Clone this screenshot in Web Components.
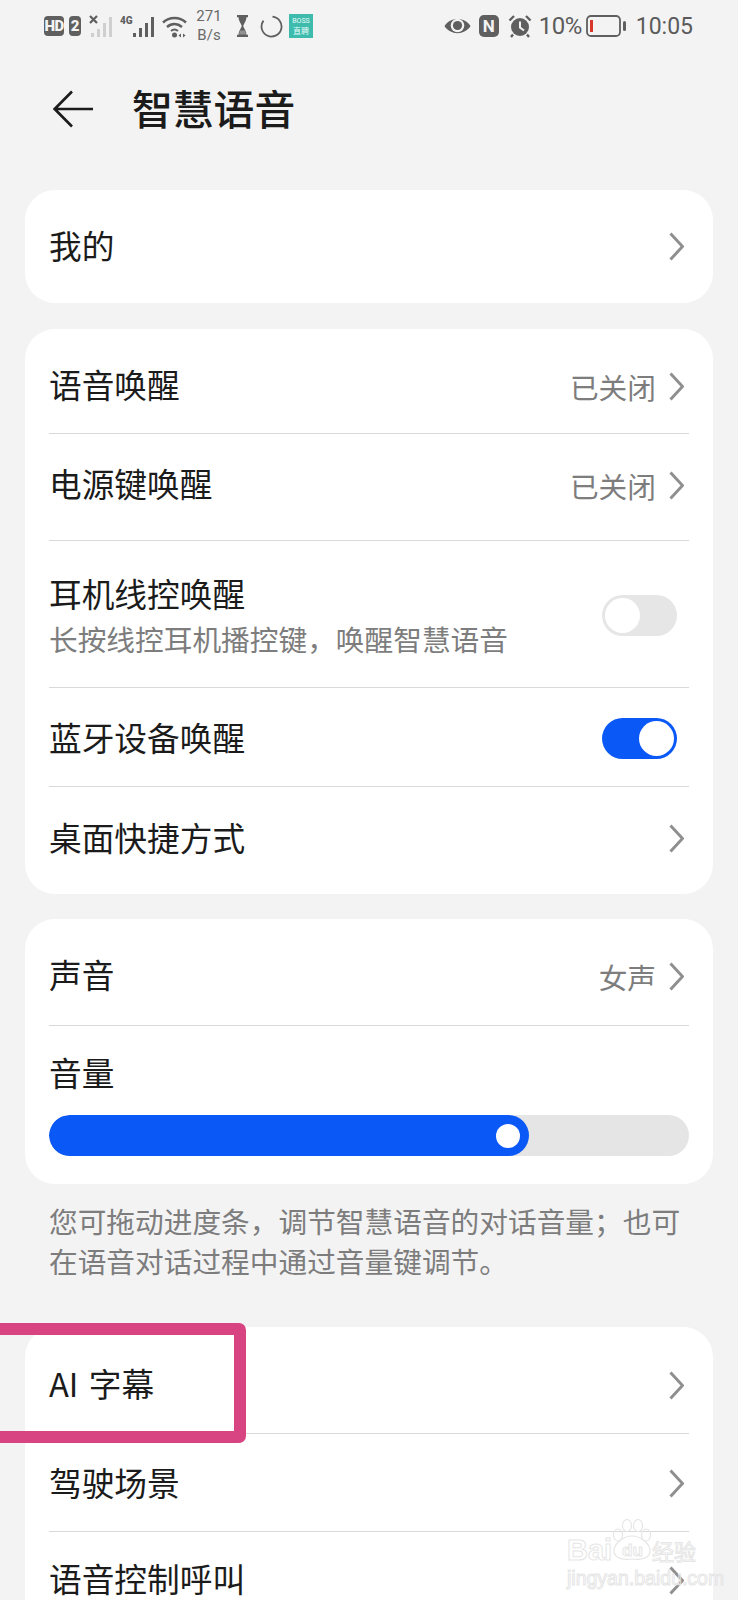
<!DOCTYPE html>
<html lang="zh-CN">
<head>
<meta charset="utf-8">
<title>智慧语音</title>
<style>
  html, body { margin: 0; background: #f3f3f4; }
  body {
    position: relative;
    width: 738px;
    height: 1600px;
    overflow: hidden;
    font-family: "Noto Sans CJK SC", "Noto Sans", sans-serif;
    color: #1b1b1b;
  }
  main { display: flex; flex-direction: column; padding: 24px 25px 0; }
</style>
</head>
<body>
<status-bar></status-bar>
<app-header>智慧语音</app-header>
<main>
  <setting-card>
    <setting-row height="113" nav plain>我的</setting-row>
  </setting-card>

  <setting-card gap="26">
    <setting-row height="105" nav value="已关闭" shift="5">语音唤醒</setting-row>
    <setting-row height="107" nav value="已关闭" shift="-2">电源键唤醒</setting-row>
    <setting-row height="147" shift="5" end-shift="1">
      耳机线控唤醒
      <span slot="sub">长按线控耳机播控键，唤醒智慧语音</span>
      <toggle-switch slot="end"></toggle-switch>
    </setting-row>
    <setting-row height="99" shift="2" end-shift="1">
      蓝牙设备唤醒
      <toggle-switch slot="end" on></toggle-switch>
    </setting-row>
    <setting-row height="107" nav plain shift="-2">桌面快捷方式</setting-row>
  </setting-card>

  <setting-card gap="25">
    <setting-row height="107" nav value="女声" shift="4">声音</setting-row>
    <volume-slider value="75">音量</volume-slider>
  </setting-card>

  <note-text>您可拖动进度条，调节智慧语音的对话音量；也可在语音对话过程中通过音量键调节。</note-text>

  <setting-card gap="0">
    <setting-row height="107" nav shift="5">AI 字幕</setting-row>
    <setting-row height="98" nav shift="1">驾驶场景</setting-row>
    <setting-row height="100" nav plain shift="-2">语音控制呼叫</setting-row>
  </setting-card>
</main>
<mark-box></mark-box>
<baidu-mark></baidu-mark>

<script>
class StatusBar extends HTMLElement {
  constructor() {
    super();
    this.attachShadow({ mode: "open" });
    this.shadowRoot.innerHTML = `
      <style>
        :host { display: flex; align-items: center; justify-content: space-between; height: 52px; padding: 0 45px 0 44px; color: #5b5b5b; font-family: Roboto, "Liberation Sans", sans-serif; }
        .group { display: flex; align-items: center; }
        svg { display: block; flex: none; }
        .badge { display: flex; align-items: center; justify-content: center; height: 20px; background: #5f5f5f; color: #f3f3f4; border-radius: 4px; font-size: 15px; font-weight: 900; }
        .hd { width: 20px; letter-spacing: -0.5px; }
        .two { width: 12px; margin-left: 5px; }
        .speed { width: 34px; margin: 0 11px 0 4px; font-size: 15px; line-height: 19px; text-align: center; color: #6a6a6a; }
        .boss { width: 24px; height: 24px; background: #3dbcae; color: #e8fbf8; font-size: 7px; line-height: 10px; text-align: center; margin-left: 6px; padding-top: 2px; box-sizing: border-box; }
        .boss span { display: block; font-family: "Noto Sans CJK SC", sans-serif; font-size: 8px; }
        .nfc { width: 20px; height: 22px; background: #5f5f5f; color: #f3f3f4; border-radius: 5px; margin: 0 9px 0 8px; font-size: 17px; font-weight: 700; line-height: 22px; text-align: center; }
        .pct { font-size: 24px; margin: 0 4px 0 7px; letter-spacing: -0.5px; }
        .time { font-size: 23px; margin-left: 9px; }
      </style>
      <div class="group">
        <div class="badge hd">HD</div>
        <div class="badge two">2</div>
        <svg width="24" height="24" viewBox="0 0 24 24" style="margin-left:8px">
          <path d="M1 2l7 7M8 2l-7 7" stroke="#5f5f5f" stroke-width="2.2"/>
          <g fill="#cfcfcf"><rect x="2" y="19" width="3" height="4"/><rect x="8" y="15" width="3" height="8"/><rect x="14" y="9" width="3" height="14"/><rect x="20" y="3" width="3" height="20"/></g>
        </svg>
        <svg width="35" height="24" viewBox="0 0 35 24" style="margin-left:7px">
          <text x="0" y="10" font-size="10" font-weight="900" fill="#5f5f5f" font-family="Roboto, sans-serif">4G</text>
          <g fill="#5f5f5f"><rect x="13" y="19" width="3" height="4"/><rect x="19" y="14" width="3" height="9"/><rect x="25" y="9" width="3" height="14"/><rect x="31" y="3" width="3" height="20"/></g>
        </svg>
        <svg width="26" height="24" viewBox="0 0 26 24" style="margin-left:7px">
          <g fill="none" stroke="#5f5f5f" stroke-width="2.4"><path d="M1 8.500C7.500 2.500 17.500 2.500 24 8.500"/><path d="M5 13C9.500 9 15.500 9 20 13"/></g>
          <path d="M9 17C11 15.300 14 15.300 16 17" fill="none" stroke="#5f5f5f" stroke-width="2"/>
          <circle cx="12.500" cy="21" r="2.500" fill="#5f5f5f"/>
          <path d="M19 19.500l-2.500 2 2.500 2zM21 19.500l2.500 2-2.500 2z" fill="#5f5f5f"/>
        </svg>
        <div class="speed">271<br>B/s</div>
        <svg width="11" height="22" viewBox="0 0 11 22">
          <path d="M0 1h11M0 21h11" stroke="#5f5f5f" stroke-width="2.400"/>
          <path d="M1.500 2h8c0 4-2.500 6.500-3.300 9 .8 2.500 3.300 5 3.300 9h-8c0-4 2.500-6.500 3.300-9C4 8.500 1.500 6 1.500 2z" fill="#5f5f5f"/>
          <path d="M3 15.500h5l1 4H2z" fill="#f3f3f4" opacity=".35"/>
        </svg>
        <svg width="23" height="23" viewBox="0 0 23 23" style="margin-left:12px">
          <path d="M12.500 1.600A10 10 0 1 1 3.500 5.600" fill="none" stroke="#5f5f5f" stroke-width="1.800"/>
        </svg>
        <div class="boss">BOSS<span>直聘</span></div>
      </div>
      <div class="group">
        <svg width="27" height="20" viewBox="0 0 27 20">
          <path d="M.5 10C6 .5 21 .5 26.500 10 21 19.500 6 19.500 .5 10z" fill="#5f5f5f"/>
          <circle cx="13.500" cy="9.500" r="6.800" fill="#f3f3f4"/>
          <circle cx="13.500" cy="9.500" r="4.600" fill="#5f5f5f"/>
        </svg>
        <div class="nfc">N</div>
        <svg width="24" height="24" viewBox="0 0 24 24">
          <circle cx="12" cy="13" r="9" fill="#5f5f5f"/>
          <path d="M12 7.500V13.500l4 3" fill="none" stroke="#f3f3f4" stroke-width="2"/>
          <path d="M1.500 6.500L6 2M22.500 6.500L18 2M5 20.500l-2 2.500M19 20.500l2 2.500" stroke="#5f5f5f" stroke-width="2.400"/>
        </svg>
        <div class="pct">10%</div>
        <svg width="41" height="22" viewBox="0 0 41 22">
          <rect x="1" y="1" width="33" height="20" rx="4" fill="none" stroke="#5f5f5f" stroke-width="1.800"/>
          <rect x="4" y="5" width="3" height="12" fill="#d8382c"/>
          <rect x="37" y="6" width="3" height="10" rx="1.500" fill="#5f5f5f"/>
        </svg>
        <div class="time">10:05</div>
      </div>`;
  }
}

class AppHeader extends HTMLElement {
  constructor() {
    super();
    this.attachShadow({ mode: "open" });
    this.shadowRoot.innerHTML = `
      <style>
        :host { display: flex; align-items: center; height: 114px; padding-left: 53px; box-sizing: border-box; }
        svg { display: block; margin-right: 38px; }
        .title { font-size: 40.8px; font-weight: 500; line-height: 56px; margin-bottom: 2px; color: #1b1b1b; }
      </style>
      <svg width="41" height="38" viewBox="0 0 41 38">
        <path d="M40 19H2M19 1.500L1.700 19 19 36.500" fill="none" stroke="#1b1b1b" stroke-width="2.600"/>
      </svg>
      <div class="title"><slot></slot></div>`;
  }
}

class SettingCard extends HTMLElement {
  constructor() {
    super();
    this.attachShadow({ mode: "open" });
    this.shadowRoot.innerHTML = `
      <style>
        :host { display: block; background: #fff; border-radius: 30px; padding: 0 24px; }
      </style>
      <slot></slot>`;
  }
  connectedCallback() {
    if (this.hasAttribute("gap")) this.style.marginTop = this.getAttribute("gap") + "px";
  }
}

// nudges a centred flex child up or down by d px, using margins
function nudge(el, d) {
  el.style.marginTop = d > 0 ? 2 * d + "px" : "0";
  el.style.marginBottom = d < 0 ? -2 * d + "px" : "0";
}

class SettingRow extends HTMLElement {
  constructor() {
    super();
    this.attachShadow({ mode: "open" });
    this.shadowRoot.innerHTML = `
      <style>
        :host { display: flex; align-items: center; justify-content: space-between; box-sizing: border-box; border-bottom: 1px solid #d9d9d9; }
        :host([plain]) { border-bottom: none; }
        .text { display: flex; flex-direction: column; font-size: 32.7px; line-height: 44px; color: #1b1b1b; word-spacing: 3px; }
        ::slotted([slot="sub"]) { font-size: 28.7px; line-height: 48px; color: #7d7d7d; }
        .end { display: flex; align-items: center; }
        .value { font-size: 28.7px; color: #7d7d7d; margin-right: 13px; }
        svg { display: block; margin-right: 5px; }
      </style>
      <div class="text"><slot></slot><slot name="sub"></slot></div>
      <div class="end"><slot name="end"></slot></div>`;
  }
  connectedCallback() {
    this.style.height = this.getAttribute("height") + "px";
    const end = this.shadowRoot.querySelector(".end");
    const shift = Number(this.getAttribute("shift") || 0);
    const endShift = this.hasAttribute("end-shift") ? Number(this.getAttribute("end-shift")) : shift;
    nudge(this.shadowRoot.querySelector(".text"), shift - 2);
    nudge(end, endShift);
    if (this.hasAttribute("value")) {
      const value = document.createElement("span");
      value.className = "value";
      value.textContent = this.getAttribute("value");
      end.appendChild(value);
    }
    if (this.hasAttribute("nav")) {
      end.insertAdjacentHTML("beforeend", `
        <svg width="15" height="29" viewBox="0 0 15 29">
          <path d="M1.500 1.500L13.500 14.500 1.500 27.500" fill="none" stroke="#8f8f8f" stroke-width="3"/>
        </svg>`);
    }
  }
}

class ToggleSwitch extends HTMLElement {
  constructor() {
    super();
    this.attachShadow({ mode: "open" });
    this.shadowRoot.innerHTML = `
      <style>
        :host { display: block; width: 75px; height: 41px; margin-right: 12px; box-sizing: border-box; padding: 3px; border-radius: 21px; background: #e6e6e6; }
        :host([on]) { background: #0a59f7; }
        .thumb { width: 35px; height: 35px; border-radius: 50%; background: #fff; }
        :host([on]) .thumb { margin-left: 34px; }
      </style>
      <div class="thumb"></div>`;
  }
}

class VolumeSlider extends HTMLElement {
  constructor() {
    super();
    this.attachShadow({ mode: "open" });
    this.shadowRoot.innerHTML = `
      <style>
        :host { display: block; height: 158px; padding-top: 24px; box-sizing: border-box; }
        .label { font-size: 32.7px; line-height: 44px; color: #1b1b1b; }
        .track { height: 41px; margin-top: 21px; border-radius: 21px; background: #e5e5e5; overflow: hidden; }
        .fill { display: flex; align-items: center; justify-content: flex-end; height: 100%; border-radius: 21px; background: #0a59f7; box-sizing: border-box; padding-right: 9px; }
        .thumb { width: 24px; height: 24px; border-radius: 50%; background: #fff; }
      </style>
      <div class="label"><slot></slot></div>
      <div class="track"><div class="fill"><div class="thumb"></div></div></div>`;
  }
  connectedCallback() {
    this.shadowRoot.querySelector(".fill").style.width = this.getAttribute("value") + "%";
  }
}

class NoteText extends HTMLElement {
  constructor() {
    super();
    this.attachShadow({ mode: "open" });
    this.shadowRoot.innerHTML = `
      <style>
        :host { display: block; padding: 17px 24px 0; height: 143px; box-sizing: border-box; font-size: 28.7px; line-height: 39.500px; color: #7d7d7d; }
      </style>
      <slot></slot>`;
  }
}

class MarkBox extends HTMLElement {
  constructor() {
    super();
    this.attachShadow({ mode: "open" });
    this.shadowRoot.innerHTML = `
      <style>
        :host { position: absolute; left: -20px; top: 1323px; width: 266px; height: 120px; box-sizing: border-box; border: 12px solid #d84482; border-radius: 7px; }
      </style>`;
  }
}

class BaiduMark extends HTMLElement {
  constructor() {
    super();
    this.attachShadow({ mode: "open" });
    this.shadowRoot.innerHTML = `
      <style>
        :host { position: absolute; left: 567px; top: 1519px; width: 132px; height: 80px; color: transparent; font-family: "Liberation Sans", sans-serif; }
        .brand, .du, .cn, .url { position: absolute; white-space: nowrap; -webkit-text-stroke: 1px #e6e6e6; }
        .brand { left: 0; top: 14px; font-size: 29px; line-height: 34px; font-weight: 700; }
        .du { left: 55px; top: 22px; font-size: 17px; line-height: 20px; font-weight: 700; }
        .cn { left: 85px; top: 15px; font-family: "Noto Sans CJK SC", sans-serif; font-size: 22px; line-height: 32px; }
        .url { left: 0; top: 48px; font-size: 19.500px; line-height: 22px; }
        svg { position: absolute; left: 45px; top: 0; }
      </style>
      <svg width="40" height="44" viewBox="0 0 40 44" fill="none" stroke="#e6e6e6" stroke-width="1.200">
        <ellipse cx="6" cy="16" rx="4.500" ry="6"/><ellipse cx="15" cy="6.500" rx="4.500" ry="6"/><ellipse cx="26" cy="6.500" rx="4.500" ry="6"/><ellipse cx="34" cy="16" rx="4.500" ry="6"/>
        <path d="M20 17c8 0 18 7 18 15 0 8-11 9-18 8-7 1-18 0-18-8 0-8 10-15 18-15z"/>
      </svg>
      <div class="brand">Bai</div>
      <div class="du">du</div>
      <div class="cn">经验</div>
      <div class="url">jingyan.baidu.com</div>`;
  }
}

customElements.define("status-bar", StatusBar);
customElements.define("app-header", AppHeader);
customElements.define("setting-card", SettingCard);
customElements.define("setting-row", SettingRow);
customElements.define("toggle-switch", ToggleSwitch);
customElements.define("volume-slider", VolumeSlider);
customElements.define("note-text", NoteText);
customElements.define("mark-box", MarkBox);
customElements.define("baidu-mark", BaiduMark);
</script>
</body>
</html>
